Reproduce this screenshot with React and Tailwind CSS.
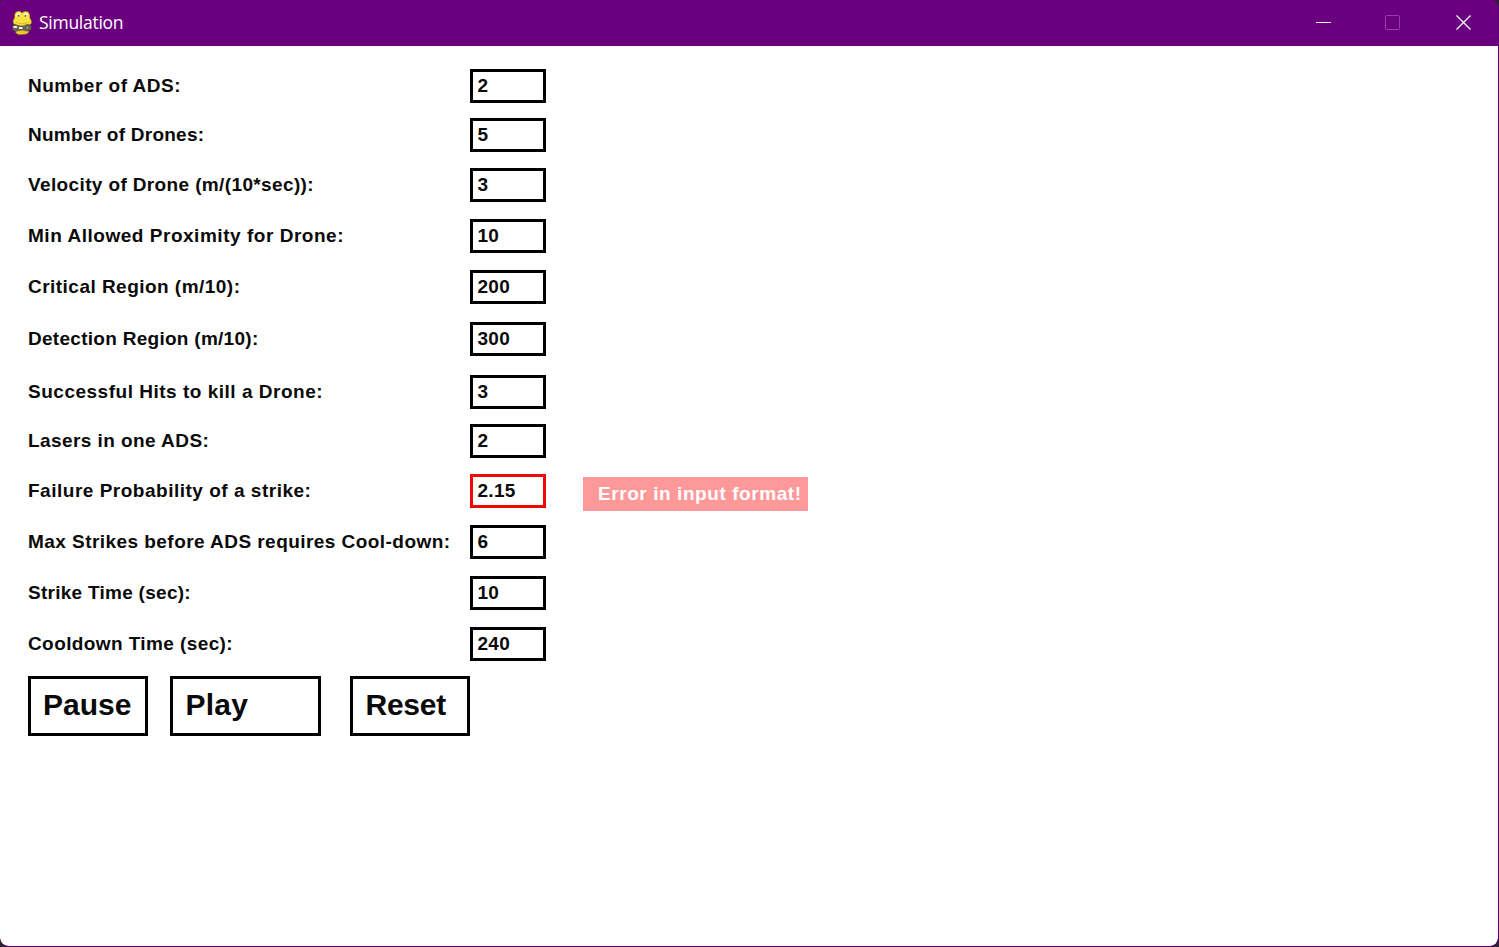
const fields = [
  { label: 'Number of ADS:', value: '2', row: 'h-[49px]', track: 'tracking-[0.5px]' },
  { label: 'Number of Drones:', value: '5', row: 'h-[50px]', track: 'tracking-[0.25px]' },
  { label: 'Velocity of Drone (m/(10*sec)):', value: '3', row: 'h-[51px]', track: 'tracking-[0.37px]' },
  { label: 'Min Allowed Proximity for Drone:', value: '10', row: 'h-[51px]', track: 'tracking-[0.53px]' },
  { label: 'Critical Region (m/10):', value: '200', row: 'h-[52px]', track: 'tracking-[0.47px]' },
  { label: 'Detection Region (m/10):', value: '300', row: 'h-[53px]', track: 'tracking-[0.28px]' },
  { label: 'Successful Hits to kill a Drone:', value: '3', row: 'h-[49px]', track: 'tracking-[0.51px]' },
  { label: 'Lasers in one ADS:', value: '2', row: 'h-[50px]', track: 'tracking-[0.43px]' },
  { label: 'Failure Probability of a strike:', value: '2.15', row: 'h-[51px]', track: 'tracking-[0.51px]', error: 'Error in input format!' },
  { label: 'Max Strikes before ADS requires Cool-down:', value: '6', row: 'h-[51px]', track: 'tracking-[0.45px]' },
  { label: 'Strike Time (sec):', value: '10', row: 'h-[51px]', track: 'tracking-[0.27px]' },
  { label: 'Cooldown Time (sec):', value: '240', row: 'h-[49px]', track: 'tracking-[0.4px]' },
];

function SnakeIcon() {
  return (
    <svg className="h-[26px] w-[24px]" viewBox="0 0 24 26">
      <path d="M7 17 H18 L19 22 Q17 25 12 24.500 Q7 25.500 5.500 22Z" fill="#e9c92c" stroke="#7a6418" strokeWidth="0.5" />
      <path d="M4.500 8 Q4 2 8 1.200 Q11 0.800 12 3 Q14 0.800 17 1.500 Q20.500 3 19.800 8 Q22.500 11 21 14 Q17 17.500 11.500 16.500 Q4 16.500 3 12 Q3 10 4.500 8Z" fill="#f7e23c" stroke="#8a721a" strokeWidth="0.5" />
      <ellipse cx="8.300" cy="4.800" rx="2" ry="2.400" fill="#fff8c8" />
      <ellipse cx="16" cy="5" rx="2" ry="2.400" fill="#fff8c8" />
      <circle cx="8.600" cy="5.800" r="0.900" fill="#4a3d16" />
      <circle cx="15.500" cy="5.900" r="0.900" fill="#4a3d16" />
      <path d="M6 12 Q11 15 18.500 12.500" fill="none" stroke="#c9a520" strokeWidth="0.700" />
      <path d="M2.500 15.500 Q5 13.500 8 15.500 Q13 17 17 14.500 Q21 14 21.500 17.500 Q21 21.500 17 21 Q13 19.500 9 20.500 Q4 22.500 2.500 19.500Z" fill="#68645c" stroke="#403a30" strokeWidth="0.500" />
      <path d="M3.500 16 h3.500 v2 h-3.500z M9 17 h3.500 v2 h-3.500z" fill="#f2efe0" />
      <circle cx="17.500" cy="17.700" r="2" fill="#8c877a" stroke="#4a453c" strokeWidth="0.600" />
    </svg>
  );
}

function TitleBar() {
  return (
    <header className="flex h-[46px] shrink-0 items-center bg-[#6a0080] pl-[10px] text-white">
      <SnakeIcon />
      <span className="ml-[5px] grow font-['Open_Sans','Noto_Sans',sans-serif] text-[17.500px] leading-none tracking-[-0.27px]">Simulation</span>
      <svg className="h-[46px] w-[208px] shrink-0" viewBox="0 0 208 46" fill="none">
        <path d="M26 22.500 H41" stroke="#fff" />
        <rect x="95.500" y="15.500" width="14" height="14" rx="1" stroke="#9540a5" />
        <path d="M166.500 15.500 L180.500 29.500 M180.500 15.500 L166.500 29.500" stroke="#fff" strokeWidth="1.300" />
      </svg>
    </header>
  );
}

function Field({ label, value, row, track, error }) {
  return (
    <div className={`flex items-start ${row}`}>
      <label className={`w-[442px] whitespace-nowrap text-[19px] leading-[34px] ${track}`}>{label}</label>
      <div className={`h-[34px] w-[75.500px] border-3 pl-[4.500px] text-[19px] leading-[28px] tracking-[0.3px] ${error ? 'border-[#f00808]' : 'border-black'}`}>{value}</div>
      {error && (
        <div className="ml-[37.500px] mt-[3px] h-[34px] w-[225px] whitespace-nowrap bg-[#ff9999] pl-[15px] text-[19px] leading-[34px] tracking-[0.57px] text-white">{error}</div>
      )}
    </div>
  );
}

export default function App() {
  return (
    <div className="h-[947px] w-[1499px] overflow-hidden bg-[#2a2430]">
      <div className="flex h-full flex-col overflow-hidden rounded-b-[9px] rounded-tr-[8px] rounded-tl-[4px] border-b border-r border-[#5a0070] bg-[#6a0080]">
        <TitleBar />
        <main className="grow overflow-hidden rounded-b-[8px] bg-white pl-[28px] pt-[23px] font-['Liberation_Sans',Arial,sans-serif] font-bold text-[#0a0a0a]">
          {fields.map((field) => (
            <Field key={field.label} {...field} />
          ))}
          <div className="flex text-[30px] leading-[51px]">
            <button className="h-[60px] w-[120px] border-3 border-black pb-[3px] pl-[12px] text-left">Pause</button>
            <button className="ml-[22px] h-[60px] w-[150.500px] border-3 border-black pb-[3px] pl-[12.500px] text-left tracking-[0.2px]">Play</button>
            <button className="ml-[29.500px] h-[60px] w-[120px] border-3 border-black pb-[3px] pl-[12.500px] text-left tracking-[-0.25px]">Reset</button>
          </div>
        </main>
      </div>
    </div>
  );
}
